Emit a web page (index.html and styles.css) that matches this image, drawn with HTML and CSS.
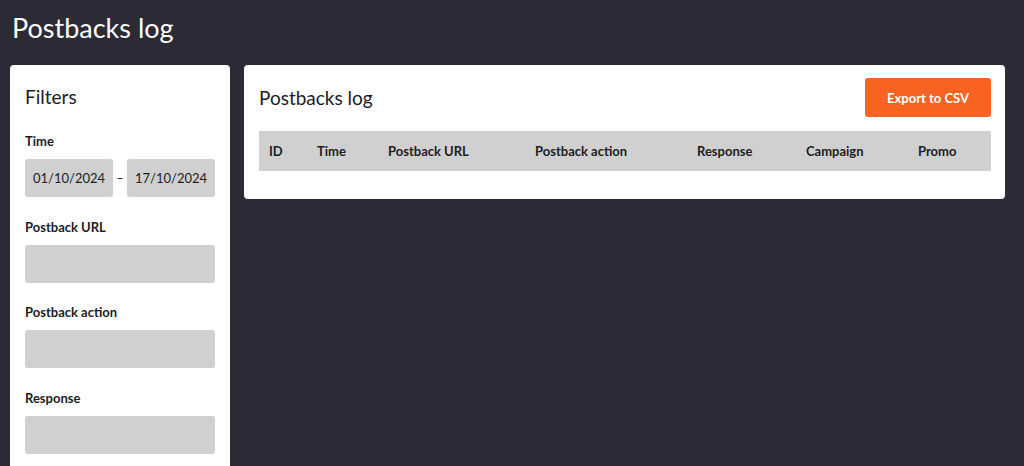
FILE: index.html
```html
<!DOCTYPE html>
<html lang="en">
<head>
    <meta charset="UTF-8">
    <meta name="viewport" content="width=device-width, initial-scale=1.0">
    <title>Postbacks log</title>
    <link rel="stylesheet" href="styles.css">
</head>
<body>
    <div class="page">
        <h1 class="page-title">Postbacks log</h1>
        <div class="layout">
            <div class="filters">
                <h2 class="card-title">Filters</h2>
                <div class="filter-group">
                    <label>Time</label>
                    <div class="date-range">
                        <input type="text" class="field date" value="01/10/2024">
                        <span class="dash">–</span>
                        <input type="text" class="field date" value="17/10/2024">
                    </div>
                </div>
                <div class="filter-group">
                    <label for="postback-url">Postback URL</label>
                    <input type="text" id="postback-url" class="field">
                </div>
                <div class="filter-group">
                    <label for="postback-action">Postback action</label>
                    <input type="text" id="postback-action" class="field">
                </div>
                <div class="filter-group">
                    <label for="response">Response</label>
                    <input type="text" id="response" class="field">
                </div>
            </div>

            <div class="log-card">
                <div class="log-header">
                    <h2 class="card-title">Postbacks log</h2>
                    <button class="export-btn">Export to CSV</button>
                </div>
                <table class="log-table">
                    <colgroup>
                        <col class="col-id">
                        <col class="col-time">
                        <col class="col-url">
                        <col class="col-action">
                        <col class="col-response">
                        <col class="col-campaign">
                        <col class="col-promo">
                    </colgroup>
                    <thead>
                        <tr>
                            <th>ID</th>
                            <th>Time</th>
                            <th>Postback URL</th>
                            <th>Postback action</th>
                            <th>Response</th>
                            <th>Campaign</th>
                            <th>Promo</th>
                        </tr>
                    </thead>
                </table>
            </div>
        </div>
    </div>
</body>
</html>
```

FILE: styles.css
```css
:root {
    --page-bg: #2c2a35;
    --card-bg: #ffffff;
    --field-bg: #d0d0d0;
    --text-color: #1d1d1f;
    --accent-color: #f96322;
}

* {
    box-sizing: border-box;
    margin: 0;
    padding: 0;
}

html, body {
    height: 100%;
}

body {
    font-family: Lato, "Open Sans", "Liberation Sans", sans-serif;
    background-color: var(--page-bg);
    color: var(--text-color);
    overflow: hidden;
}

.page {
    padding: 11px 19px 0 10px;
}

.page-title {
    color: #ffffff;
    font-size: 27px;
    font-weight: 400;
    line-height: 34px;
    padding-left: 2px;
    margin-bottom: 20px;
}

.layout {
    display: flex;
    gap: 14px;
    align-items: flex-start;
}

.filters {
    width: 220px;
    flex-shrink: 0;
    background-color: var(--card-bg);
    border-radius: 4px;
    padding: 20px 15px 40px;
}

.card-title {
    font-size: 19px;
    font-weight: 400;
    line-height: 24px;
}

.filters .card-title {
    margin-bottom: 24px;
}

.filter-group {
    margin-bottom: 21.5px;
}

.filter-group label {
    display: block;
    font-size: 13px;
    font-weight: 700;
    line-height: 16px;
    margin-bottom: 10px;
}

.field {
    display: block;
    width: 100%;
    height: 38px;
    border: none;
    border-radius: 3px;
    background-color: var(--field-bg);
    font-family: inherit;
    font-size: 13px;
    color: var(--text-color);
    padding: 0 6px 0 8px;
}

.date-range {
    display: flex;
    align-items: center;
}

.field.date {
    width: 88px;
}

.dash {
    width: 15px;
    text-align: center;
    font-size: 13px;
}

.log-card {
    flex: 1;
    background-color: var(--card-bg);
    border-radius: 4px;
    padding: 13px 14px 28px 15px;
}

.log-header {
    display: flex;
    justify-content: space-between;
    align-items: center;
    margin-bottom: 14px;
}

.export-btn {
    width: 126px;
    height: 39px;
    border: none;
    border-radius: 3px;
    background-color: var(--accent-color);
    color: #ffffff;
    font-family: inherit;
    font-size: 13px;
    font-weight: 700;
    cursor: pointer;
}

.log-table {
    width: 100%;
    border-collapse: collapse;
    table-layout: fixed;
}

.log-table th {
    background-color: var(--field-bg);
    height: 40px;
    padding: 0 0 0 10px;
    text-align: left;
    font-size: 13px;
    font-weight: 700;
}

.col-id { width: 48px; }
.col-time { width: 71px; }
.col-url { width: 147px; }
.col-action { width: 162px; }
.col-response { width: 109px; }
.col-campaign { width: 112px; }
.col-promo { width: 83px; }
```
